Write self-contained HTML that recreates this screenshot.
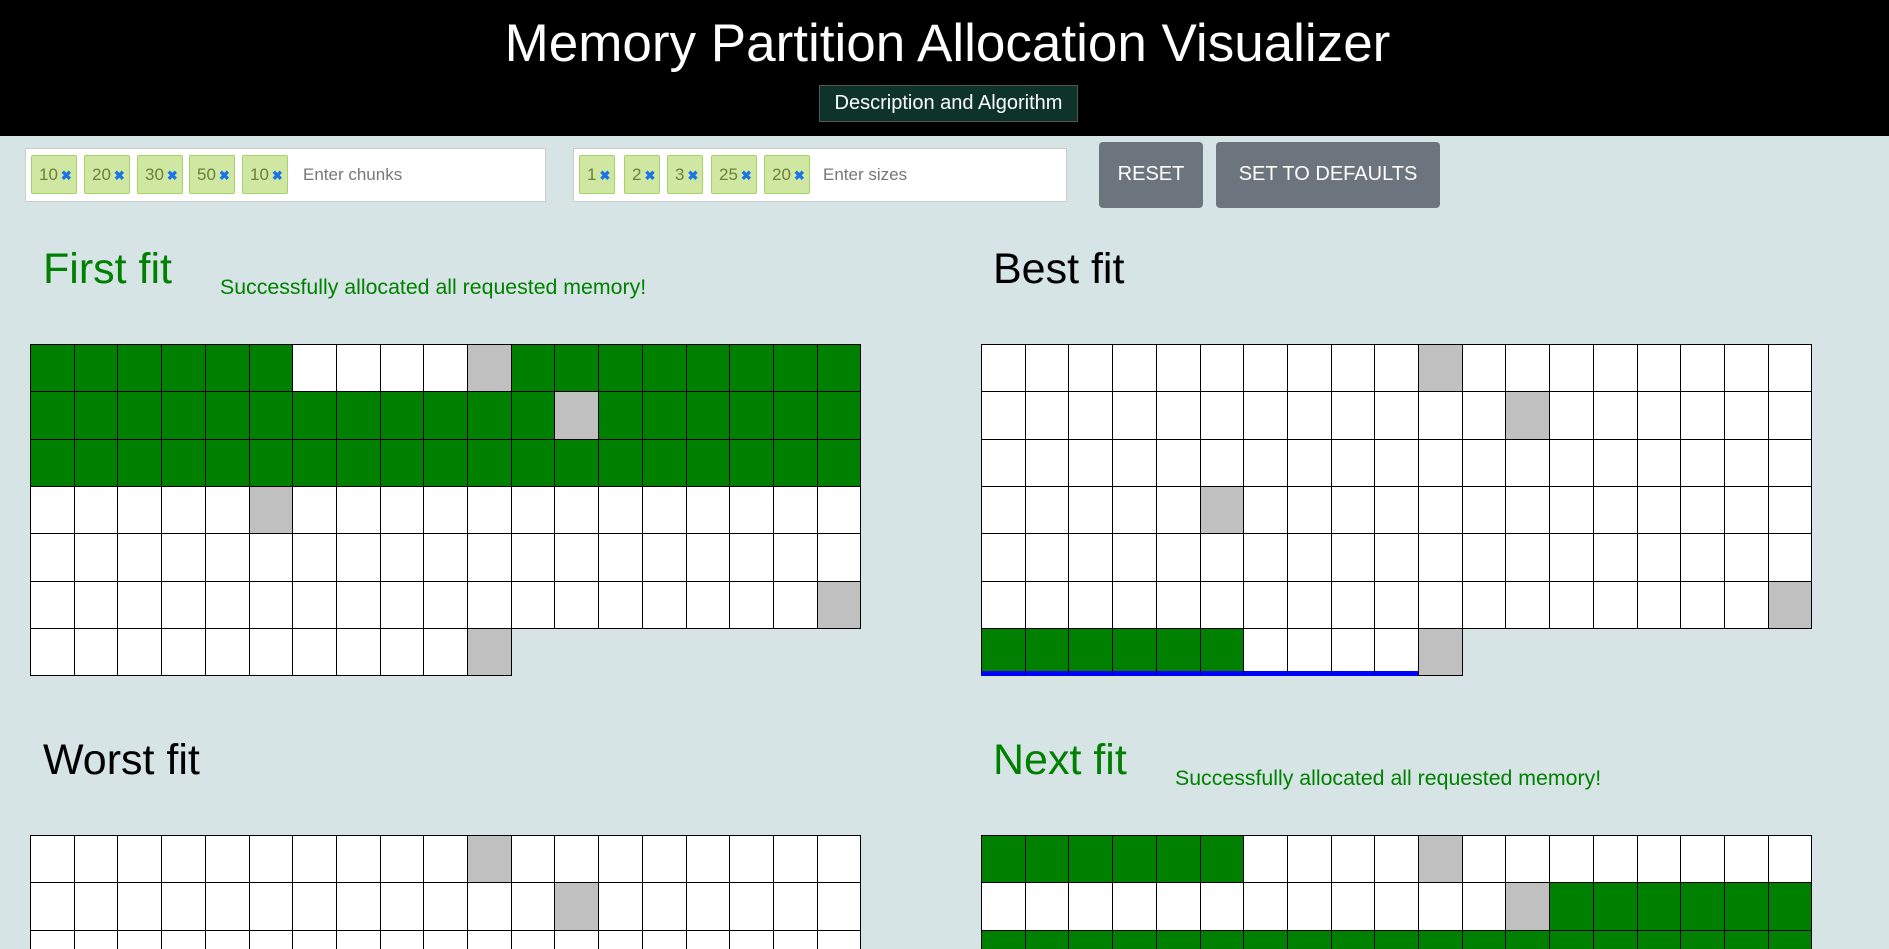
<!DOCTYPE html>
<html><head><meta charset="utf-8"><style>
*{box-sizing:border-box}
html{overflow:hidden;height:949px}
body{margin:0;width:1889px;height:949px;overflow:hidden;background:#d6e4e5;font-family:"Liberation Sans",Arial,sans-serif;position:relative}
.hdr{position:absolute;left:0;top:0;width:1889px;height:136px;background:#000}
.hdr h1{margin:0;position:absolute;top:13px;width:100%;text-align:center;color:#fff;font-weight:normal;font-size:53px;padding-left:6px}
.desc{position:absolute;left:819px;top:85px;width:259px;height:37px;background:#0e3328;border:1px solid #555;color:#fff;font-size:20px;line-height:35px;text-align:center}
.inp{position:absolute;top:148px;height:54px;background:#fff;border:1px solid #ccc}
.tag{position:absolute;top:6px;height:39px;background:#cfe7a0;border:1px solid #a5d36b;border-radius:2px;color:#6b7f3a;font-size:17px;line-height:37px;padding-left:7px}
.tag b{color:#1a73e8;font-size:13px;margin-left:3px}
.ph{position:absolute;top:6px;line-height:39px;color:#777;font-size:17px}
.btn{position:absolute;top:142px;height:66px;background:#6c757d;color:#fff;border-radius:4px;font-size:20px;line-height:64px;text-align:center}
h2{position:absolute;margin:0;font-weight:normal;font-size:43px}
.msg{position:absolute;color:#008000;font-size:21.3px}
.grid{position:absolute;width:832px}
.c{position:absolute;height:47px;border:1px solid #000;background:#fff}
.g{background:#008000}.s{background:#c0c0c0}.u{border-bottom:5px solid #00f}
</style></head><body>
<div class="hdr"><h1>Memory Partition Allocation Visualizer</h1><div class="desc">Description and Algorithm</div></div>
<div class="inp" style="left:25px;width:521px">
<div class="tag" style="left:5px;width:46px">10<b>✖</b></div>
<div class="tag" style="left:58px;width:46px">20<b>✖</b></div>
<div class="tag" style="left:111px;width:46px">30<b>✖</b></div>
<div class="tag" style="left:163px;width:46px">50<b>✖</b></div>
<div class="tag" style="left:216px;width:46px">10<b>✖</b></div>
<div class="ph" style="left:277px">Enter chunks</div></div>
<div class="inp" style="left:573px;width:494px">
<div class="tag" style="left:5px;width:36px">1<b>✖</b></div>
<div class="tag" style="left:50px;width:36px">2<b>✖</b></div>
<div class="tag" style="left:93px;width:36px">3<b>✖</b></div>
<div class="tag" style="left:137px;width:46px">25<b>✖</b></div>
<div class="tag" style="left:190px;width:46px">20<b>✖</b></div>
<div class="ph" style="left:249px">Enter sizes</div></div>
<div class="btn" style="left:1099px;width:104px">RESET</div>
<div class="btn" style="left:1216px;width:224px">SET TO DEFAULTS</div>
<h2 style="left:43px;top:245px;color:#008000">First fit</h2>
<div class="msg" style="left:220px;top:275px">Successfully allocated all requested memory!</div>
<h2 style="left:993px;top:245px">Best fit</h2>
<h2 style="left:43px;top:736px">Worst fit</h2>
<h2 style="left:993px;top:736px;color:#008000">Next fit</h2>
<div class="msg" style="left:1175px;top:766px">Successfully allocated all requested memory!</div>
<div id="g1" class="grid" style="left:30px;top:344px;height:340px"></div>
<div id="g2" class="grid" style="left:981px;top:344px;height:340px"></div>
<div id="g3" class="grid" style="left:30px;top:835px;height:114px;overflow:hidden"></div>
<div id="g4" class="grid" style="left:981px;top:835px;height:114px;overflow:hidden"></div>
<script>
var chunks=[10,20,30,50,10];
function draw(id,fill,under){
 var el=document.getElementById(id),h='',i=0;
 for(var k=0;k<chunks.length;k++){
  for(var j=0;j<=chunks[k];j++){
   var cls='c';
   if(j==chunks[k])cls+=' s';else{ if(j<fill[k])cls+=' g'; if(under&&under[k])cls+=' u';}
   var r=Math.floor(i/19),c=i%19;
   var l=Math.round(c*43.7),w=Math.round((c+1)*43.7)-l+1;
   h+='<div class="'+cls+'" style="left:'+l+'px;width:'+w+'px;top:'+Math.round(r*47.3)+'px;height:'+(Math.round((r+1)*47.3)-Math.round(r*47.3)+1)+'px"></div>';i++;
  }
 }
 el.innerHTML=h;
}
draw('g1',[6,20,25,0,0]);
draw('g2',[0,0,0,0,6],[0,0,0,0,1]);
draw('g3',[0,0,0,0,0]);
draw('g4',[6,0,30,0,0]);
</script>
</body></html>
